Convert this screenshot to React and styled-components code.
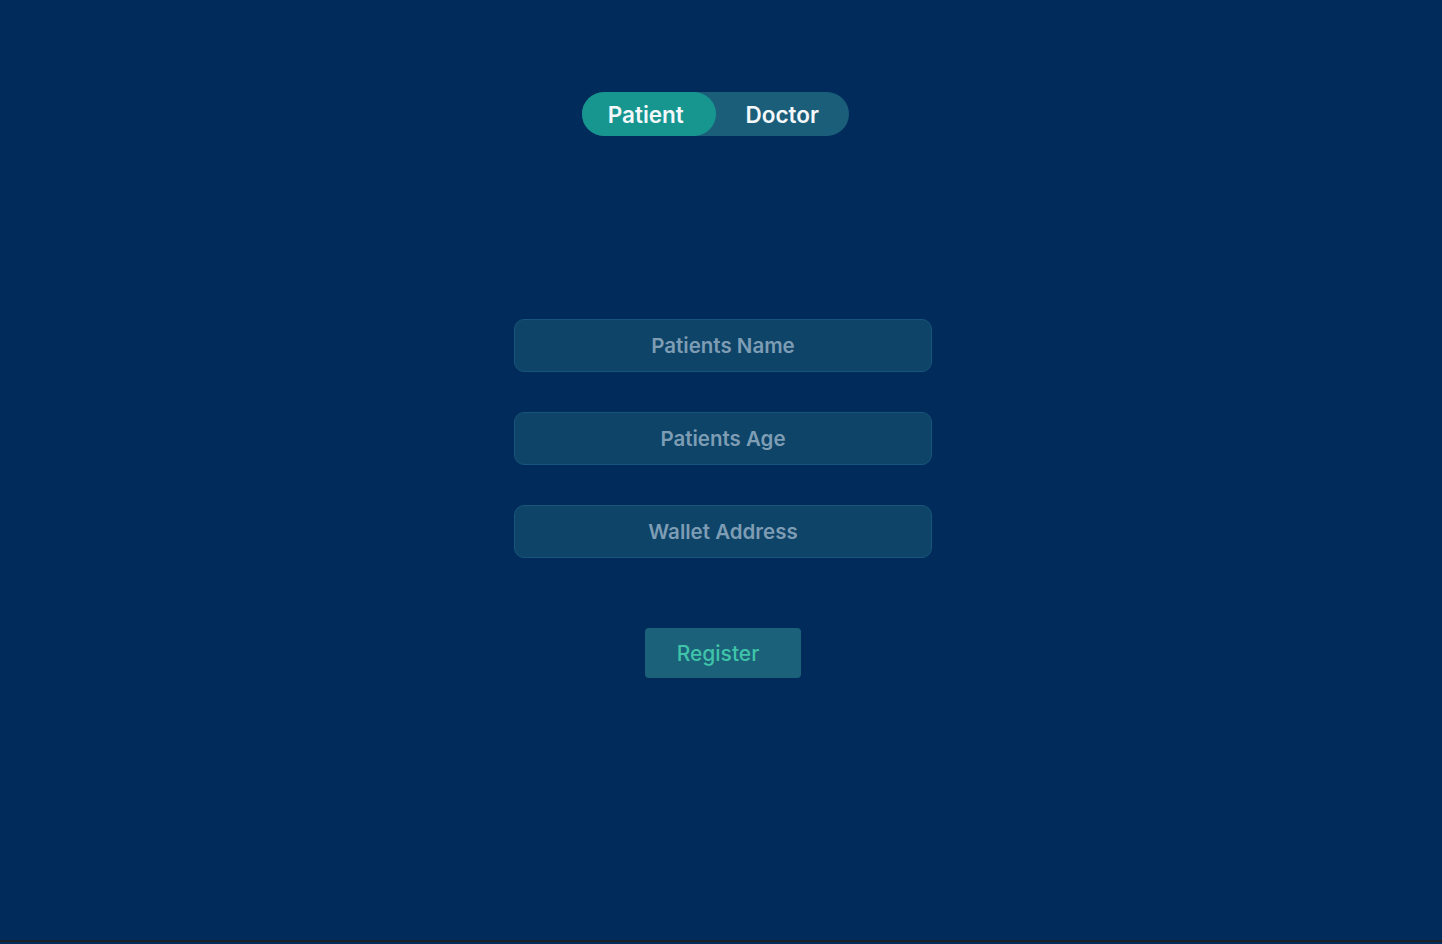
import React, { useState } from "react";
import styled, { createGlobalStyle } from "styled-components";

const GlobalStyle = createGlobalStyle`
    html, body {
        margin: 0;
        padding: 0;
        background: #002b5b;
    }
    body {
        font-family: Inter, "Noto Sans", sans-serif;
    }
`;

const Page = styled.div`
    min-height: 942px;
    background: #002b5b;
    border-bottom: 2px solid #1c1f24;
    display: flex;
    flex-direction: column;
    align-items: center;
    padding-top: 92px;
    box-sizing: border-box;
`;

const Toggle = styled.div`
    display: flex;
    width: 267px;
    height: 44px;
    border-radius: 22px;
    background: #1b5e79;
    margin-left: -11px;
`;

const ToggleOption = styled.button`
    flex: 0 0 50%;
    box-sizing: border-box;
    border: none;
    border-radius: 22px;
    background: ${({ $active }) => ($active ? "#179690" : "transparent")};
    color: #f4f8fa;
    font-family: Inter, sans-serif;
    font-size: 22.5px;
    font-weight: 600;
    cursor: pointer;
    padding: ${({ $active }) => ($active ? "0 6px 0 0" : "0")};
`;

const Form = styled.form`
    display: flex;
    flex-direction: column;
    align-items: center;
    gap: 40px;
    margin-top: 183px;
    margin-left: 4px;
`;

const Field = styled.input`
    width: 418px;
    height: 53px;
    box-sizing: border-box;
    border: 1px solid #18557a;
    border-radius: 10px;
    background: #0d4468;
    color: #dbe6ee;
    text-align: center;
    font-family: Inter, sans-serif;
    font-size: 20.5px;
    font-weight: 600;
    outline: none;

    &::placeholder {
        color: #7e9db4;
    }
`;

const RegisterButton = styled.button`
    margin-top: 30px;
    width: 156px;
    height: 50px;
    border: none;
    border-radius: 4px;
    background: #1b6179;
    color: #3fc4a9;
    font-family: Inter, sans-serif;
    font-size: 21px;
    font-weight: 500;
    padding: 0 10px 0 0;
    cursor: pointer;
`;

const App = () => {
    const [role, setRole] = useState("patient");

    return (
        <>
            <GlobalStyle />
            <Page>
                <Toggle>
                    <ToggleOption $active={role === "patient"} onClick={() => setRole("patient")}>
                        Patient
                    </ToggleOption>
                    <ToggleOption $active={role === "doctor"} onClick={() => setRole("doctor")}>
                        Doctor
                    </ToggleOption>
                </Toggle>
                <Form onSubmit={(e) => e.preventDefault()}>
                    <Field placeholder="Patients Name" />
                    <Field placeholder="Patients Age" />
                    <Field placeholder="Wallet Address" />
                    <RegisterButton type="submit">Register</RegisterButton>
                </Form>
            </Page>
        </>
    );
};

export default App;
